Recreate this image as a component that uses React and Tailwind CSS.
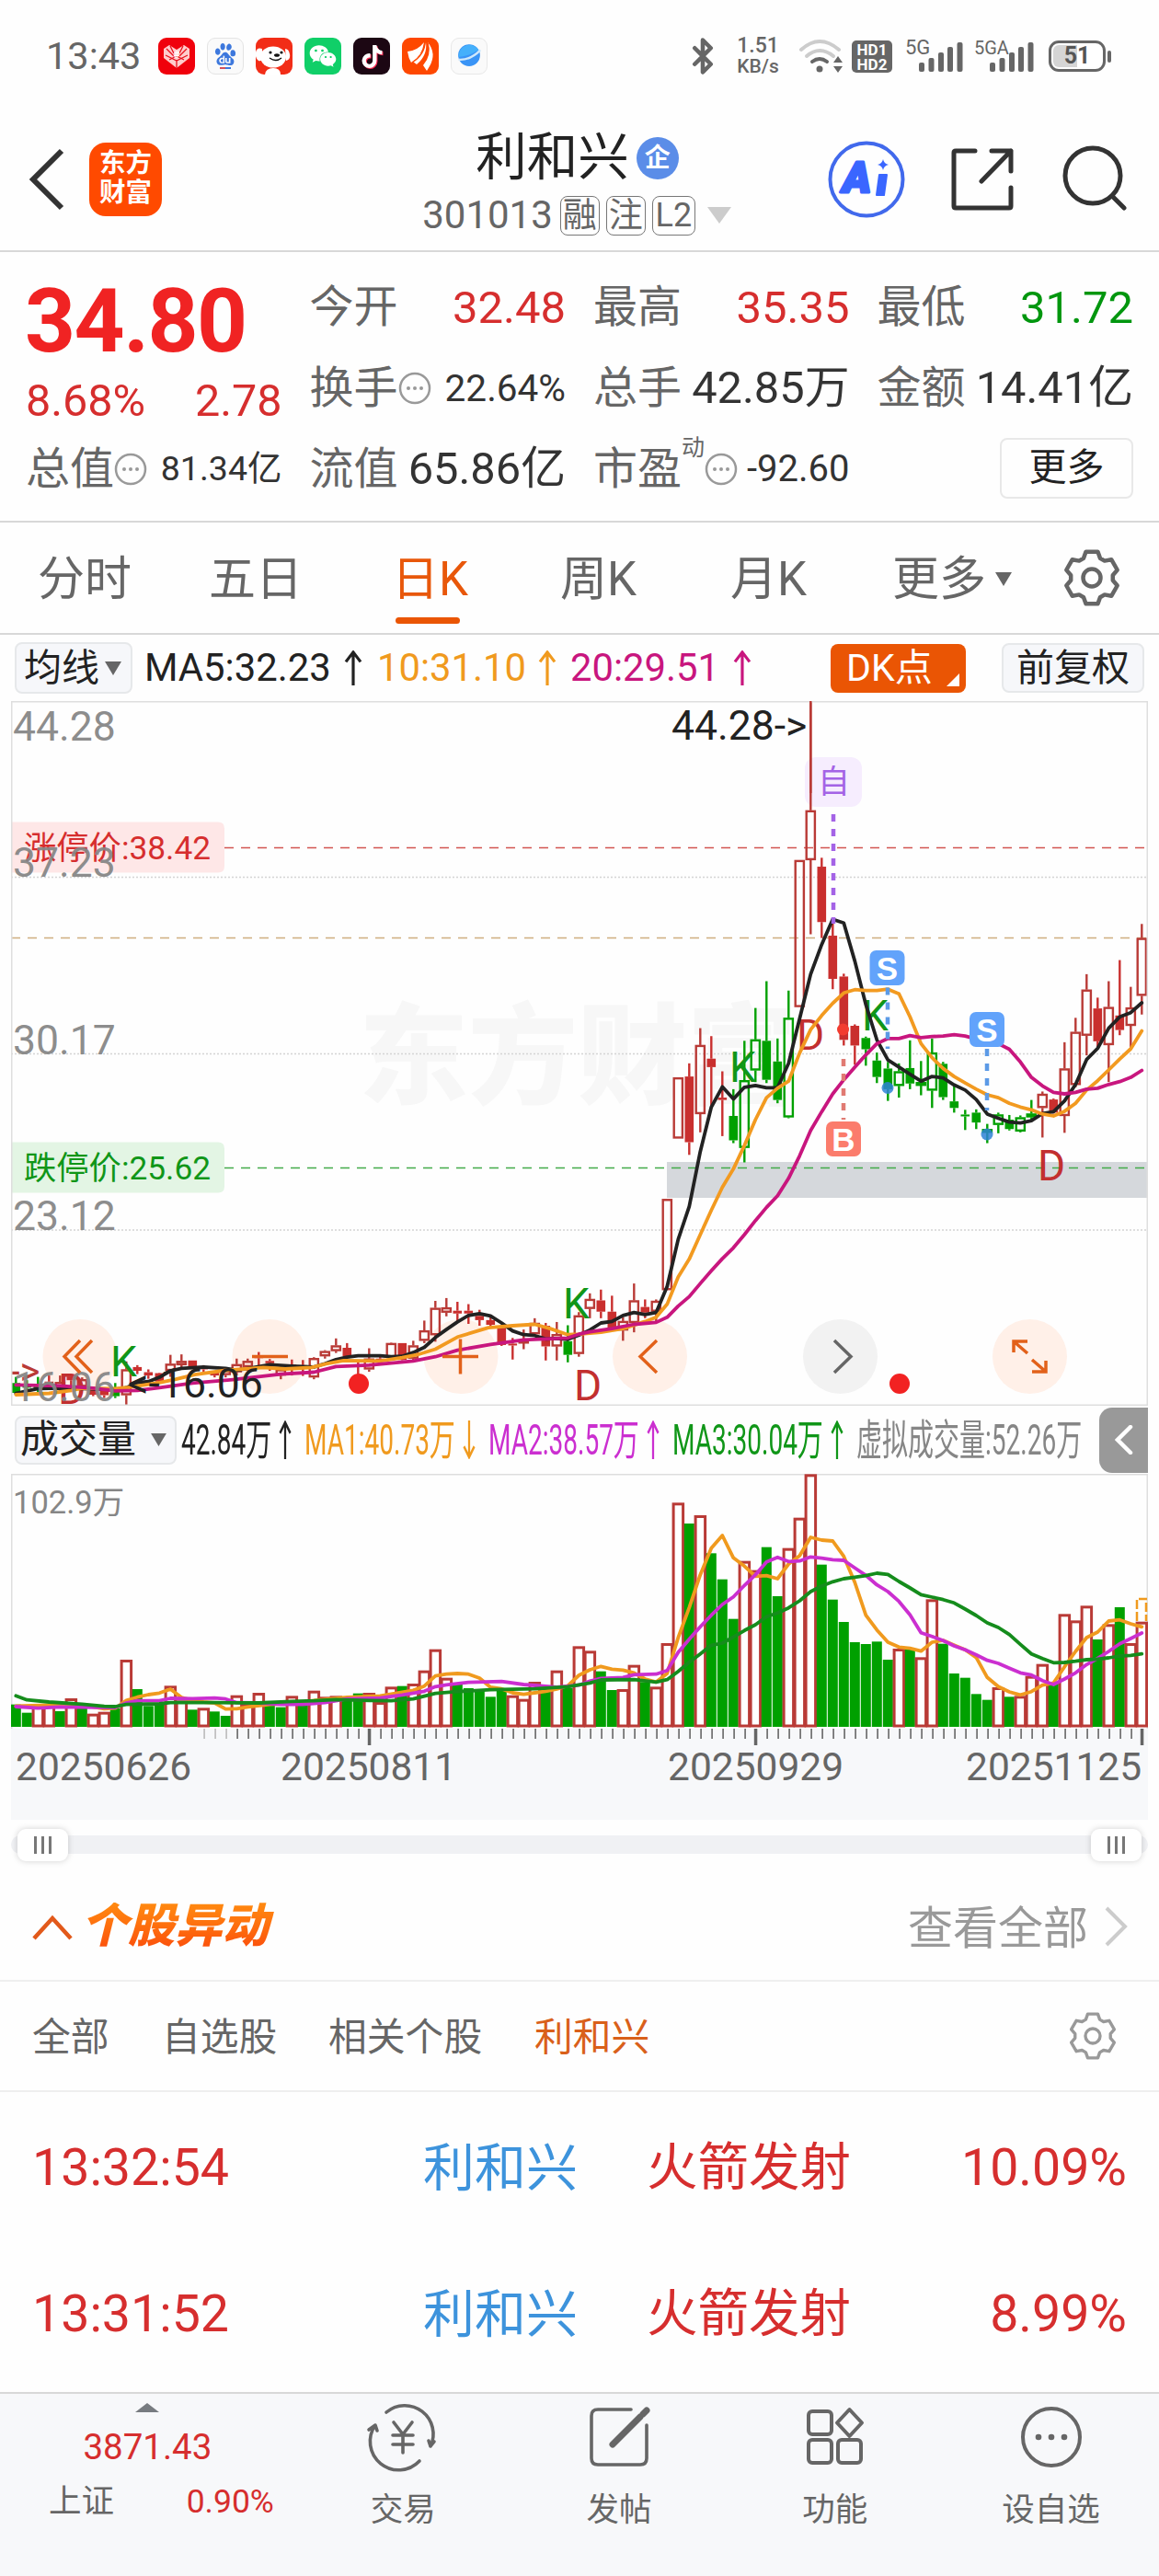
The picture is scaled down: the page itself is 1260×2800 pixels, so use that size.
import { Bluetooth } from "lucide-react";
import { FaTiktok, FaWeixin } from "react-icons/fa6";
import { SiBaidu } from "react-icons/si";

const RED = "#b93a36";
const GREEN = "#00a000";

// [tipo, máximo, techo del cuerpo, piso del cuerpo, mínimo]
// r/g = vela hueca, R/G = vela rellena
const candles = [
  ["G", 1483, 1496, 1517, 1519], ["G", 1490, 1499, 1506, 1514], ["G", 1483, 1500, 1508, 1516], ["R", 1480, 1493, 1502, 1508],
  ["r", 1480, 1494, 1506, 1514], ["R", 1482, 1482, 1490, 1512], ["r", 1484, 1488, 1504, 1512], ["R", 1506, 1511, 1521, 1524],
  ["R", 1506, 1513, 1522, 1528], ["G", 1496, 1510, 1524, 1528], ["r", 1450, 1467, 1522, 1546], ["R", 1458, 1462, 1470, 1477],
  ["R", 1467, 1473, 1480, 1487], ["R", 1474, 1475, 1493, 1495], ["r", 1436, 1455, 1470, 1483], ["r", 1435, 1449, 1458, 1464],
  ["R", 1448, 1448, 1463, 1465], ["R", 1458, 1463, 1467, 1476], ["R", 1470, 1473, 1480, 1484], ["r", 1466, 1469, 1479, 1484],
  ["r", 1444, 1456, 1473, 1480], ["r", 1444, 1449, 1462, 1470], ["R", 1430, 1437, 1443, 1460], ["R", 1445, 1449, 1454, 1470],
  ["r", 1463, 1467, 1480, 1488], ["R", 1446, 1457, 1462, 1480], ["R", 1447, 1458, 1462, 1481], ["r", 1441, 1443, 1484, 1488],
  ["r", 1426, 1428, 1439, 1444], ["r", 1401, 1416, 1428, 1432], ["R", 1411, 1421, 1439, 1440], ["R", 1450, 1458, 1462, 1480],
  ["r", 1422, 1444, 1467, 1472], ["R", 1436, 1444, 1447, 1457], ["r", 1410, 1411, 1441, 1444], ["R", 1411, 1411, 1447, 1448],
  ["r", 1406, 1416, 1444, 1449], ["r", 1363, 1384, 1406, 1411], ["r", 1321, 1336, 1394, 1408], ["r", 1315, 1335, 1346, 1354],
  ["R", 1323, 1342, 1348, 1364], ["R", 1328, 1342, 1348, 1370], ["R", 1340, 1353, 1362, 1374], ["R", 1352, 1362, 1372, 1378],
  ["R", 1376, 1378, 1415, 1417], ["R", 1400, 1412, 1416, 1446], ["r", 1382, 1404, 1411, 1424], ["r", 1358, 1368, 1392, 1397],
  ["R", 1368, 1374, 1418, 1448], ["r", 1366, 1392, 1418, 1448], ["G", 1373, 1407, 1436, 1452], ["r", 1345, 1352, 1434, 1440],
  ["r", 1305, 1317, 1338, 1358], ["R", 1297, 1320, 1344, 1358], ["R", 1310, 1344, 1378, 1380], ["r", 1356, 1364, 1384, 1406],
  ["r", 1284, 1320, 1368, 1388], ["R", 1318, 1334, 1346, 1358], ["r", 1318, 1321, 1344, 1368], ["r", 1104, 1104, 1298, 1298],
  ["r", 845, 845, 975, 975], ["R", 815, 843, 983, 1010], ["r", 740, 776, 923, 962], ["R", 757, 805, 823, 910],
  ["R", 832, 888, 893, 970], ["G", 870, 927, 979, 985], ["g", 767, 851, 995, 1026], ["g", 697, 764, 830, 855],
  ["G", 640, 767, 850, 857], ["G", 762, 811, 893, 900], ["g", 660, 718, 930, 932], ["r", 382, 382, 695, 695],
  ["r", 43, 276, 382, 540], ["R", 377, 396, 514, 548], ["R", 512, 543, 635, 657], ["R", 624, 630, 765, 777],
  ["R", 732, 735, 777, 818], ["G", 758, 761, 785, 820], ["G", 792, 809, 844, 857], ["G", 812, 826, 870, 895],
  ["g", 815, 832, 863, 888], ["G", 766, 825, 858, 870], ["g", 810, 855, 860, 883], ["g", 762, 792, 873, 910],
  ["G", 812, 816, 887, 893], ["G", 863, 896, 910, 920], ["G", 914, 924, 928, 957], ["G", 913, 920, 941, 955],
  ["g", 944, 955, 962, 985], ["g", 920, 924, 946, 964], ["G", 925, 935, 955, 958], ["g", 926, 930, 960, 962],
  ["g", 893, 922, 930, 938], ["r", 875, 880, 910, 973], ["R", 890, 892, 920, 922], ["r", 770, 826, 927, 963],
  ["r", 718, 748, 861, 866], ["r", 625, 658, 756, 798], ["R", 675, 698, 768, 782], ["r", 640, 695, 776, 855],
  ["R", 595, 713, 744, 755], ["r", 652, 696, 735, 783], ["r", 518, 548, 671, 711],
];

// Medias móviles: [índice de vela, valor]
const ma5 = [
  [0, 1518], [2, 1508], [4, 1507], [6, 1508], [9, 1510], [10, 1506], [11, 1495], [12, 1493], [13, 1484], [14, 1470], [15, 1465],
  [17, 1462], [19, 1465], [20, 1469], [23, 1457], [25, 1460], [27, 1462], [28, 1455], [29, 1446], [30, 1441], [31, 1438],
  [33, 1438], [34, 1440], [35, 1439], [36, 1431], [37, 1420], [38, 1399], [39, 1382], [40, 1366], [41, 1352], [42, 1348],
  [43, 1353], [44, 1368], [45, 1385], [46, 1393], [47, 1395], [48, 1402], [49, 1401], [50, 1403], [51, 1394], [52, 1383],
  [53, 1368], [54, 1365], [55, 1352], [56, 1346], [57, 1350], [58, 1346], [59, 1290], [60, 1190], [61, 1120], [62, 1003],
  [63, 908], [64, 865], [65, 891], [66, 866], [67, 862], [68, 867], [69, 867], [70, 815], [71, 720], [72, 625], [73, 562],
  [74, 508], [75, 516], [76, 597], [77, 690], [78, 765], [79, 808], [80, 823], [81, 838], [82, 853], [83, 843], [84, 846],
  [85, 861], [86, 872], [87, 892], [88, 923], [89, 932], [90, 940], [91, 942], [92, 937], [93, 922], [94, 918], [95, 895],
  [96, 860], [97, 807], [98, 783], [99, 740], [100, 716], [101, 707], [102, 686],
];
const ma10 = [
  [0, 1521], [3, 1518], [5, 1512], [6, 1507], [9, 1508], [10.3, 1505], [13, 1495], [14.5, 1488], [16.2, 1478], [19, 1469],
  [22.4, 1463], [24.4, 1466], [26.8, 1463], [28.1, 1455], [29.7, 1448], [33, 1449], [35, 1442], [36.3, 1436], [38, 1424],
  [40, 1398], [42.8, 1378], [45, 1374], [47, 1371], [48.4, 1380], [50, 1393], [51, 1392], [53, 1388], [55, 1380], [57, 1365],
  [58, 1356], [59, 1328], [60, 1270], [61, 1232], [62, 1180], [63, 1128], [64, 1079], [65, 1040], [66, 990], [67, 935],
  [68, 888], [69, 868], [70, 853], [71, 793], [72, 743], [73, 713], [74, 687], [75, 665], [76, 658], [77, 660], [78, 660],
  [79, 657], [80, 667], [81, 716], [82, 773], [83, 803], [84, 826], [85, 843], [86, 857], [87, 870], [88, 882], [89, 888],
  [90, 900], [91, 908], [92, 914], [93, 923], [94, 927], [95, 917], [96, 900], [97, 872], [98, 852], [99, 829], [100, 806],
  [101, 784], [102, 746],
];
const ma20 = [
  [0, 1500], [4, 1502], [7, 1507], [9, 1513], [11, 1512], [13, 1506], [16, 1496], [20, 1488], [24, 1477], [27, 1473], [29, 1461],
  [32, 1458], [36, 1449], [38, 1440], [40, 1426], [43, 1414], [46, 1404], [50, 1400], [51, 1392], [52, 1387], [54, 1380],
  [56, 1371], [58, 1367], [59, 1356], [60, 1332], [61, 1312], [62, 1284], [63, 1257], [64, 1231], [65, 1208], [66, 1180],
  [67, 1150], [68, 1122], [69, 1097], [70, 1060], [71, 1012], [72, 958], [73, 918], [74, 880], [75, 850], [76, 823], [77, 797],
  [78, 773], [79, 762], [80, 762], [81, 756], [82, 760], [83, 758], [84, 757], [85, 754], [86, 757], [87, 763], [88, 767],
  [89, 773], [90, 785], [91, 812], [92, 845], [93, 863], [94, 877], [95, 880], [96, 877], [97, 870], [98, 868], [99, 860],
  [100, 854], [101, 845], [102, 830],
];

const volumes = [
  ["G", 998], ["G", 1025], ["r", 998], ["r", 998], ["G", 1020], ["r", 978], ["G", 1005], ["r", 1028], ["r", 1022], ["G", 1010],
  ["r", 852], ["G", 948], ["G", 1003], ["G", 998], ["r", 937], ["r", 985], ["G", 1015], ["r", 1009], ["G", 1021], ["G", 1035],
  ["r", 968], ["r", 997], ["r", 960], ["G", 995], ["G", 1007], ["r", 970], ["G", 998], ["r", 953], ["r", 973], ["r", 970],
  ["G", 985], ["G", 962], ["r", 960], ["r", 990], ["r", 940], ["G", 938], ["r", 930], ["r", 887], ["r", 818], ["r", 911],
  ["G", 930], ["G", 945], ["G", 950], ["G", 973], ["G", 950], ["r", 968], ["r", 980], ["r", 924], ["G", 945], ["r", 887],
  ["G", 945], ["r", 808], ["r", 823], ["G", 890], ["G", 951], ["r", 948], ["r", 869], ["G", 925], ["r", 940], ["r", 798],
  ["r", 340], ["G", 408], ["r", 381], ["G", 505], ["G", 590], ["G", 719], ["r", 530], ["r", 560], ["G", 485], ["G", 645],
  ["r", 488], ["r", 389], ["r", 247], ["G", 542], ["G", 656], ["G", 729], ["G", 795], ["G", 801], ["G", 793], ["G", 852],
  ["r", 816], ["G", 818], ["r", 844], ["r", 655], ["G", 800], ["G", 897], ["G", 911], ["G", 964], ["G", 983], ["r", 942],
  ["G", 973], ["r", 970], ["r", 905], ["r", 866], ["G", 930], ["r", 703], ["r", 724], ["r", 676], ["G", 786], ["r", 736],
  ["G", 681], ["r", 798], ["r", 728],
];
const vma1 = [
  [0, 1003], [3, 1000], [6, 1000], [8, 1012], [9, 1010], [10, 985], [11, 974], [12, 966], [13, 961], [14, 948], [15, 975],
  [16, 985], [17, 990], [18, 993], [19, 1013], [20, 1012], [21, 1006], [23, 998], [25, 995], [27, 985], [30, 975], [33, 970],
  [35, 958], [36, 952], [37, 938], [38, 905], [39, 899], [40, 897], [41, 899], [42, 912], [43, 942], [44, 947], [45, 960],
  [46, 965], [47, 960], [48, 955], [49, 948], [50, 937], [51, 903], [52, 885], [53, 874], [54, 883], [55, 886], [56, 895],
  [57, 915], [58, 925], [59, 897], [60, 780], [61, 682], [62, 575], [63, 488], [64, 447], [65, 520], [66, 547], [67, 580],
  [68, 578], [69, 588], [70, 540], [71, 513], [72, 453], [73, 462], [74, 465], [75, 515], [76, 600], [77, 707], [78, 755],
  [79, 795], [80, 811], [81, 815], [82, 824], [83, 795], [84, 789], [85, 805], [86, 820], [87, 845], [88, 910], [89, 940],
  [90, 957], [91, 967], [92, 956], [93, 935], [94, 928], [95, 875], [96, 825], [97, 780], [98, 762], [99, 726], [100, 722],
  [101, 735], [102, 745],
];
const vma2 = [
  [0, 1005], [2, 1010], [4, 1006], [9, 1008], [10, 993], [11, 986], [13, 986], [14, 978], [16, 979], [18, 977], [19, 980],
  [20, 992], [22, 993], [24, 998], [26, 998], [28, 992], [30, 980], [33, 977], [35, 967], [37, 955], [38, 940], [39, 934],
  [41, 926], [44, 923], [46, 933], [49, 942], [51, 935], [52, 922], [53, 913], [55, 910], [56, 901], [58, 899], [59, 887],
  [60, 828], [61, 785], [62, 745], [63, 707], [64, 672], [65, 647], [66, 610], [67, 575], [68, 533], [69, 518], [70, 532],
  [71, 530], [72, 517], [73, 521], [74, 526], [75, 528], [76, 553], [77, 577], [78, 608], [79, 630], [80, 662], [81, 706],
  [82, 764], [83, 776], [84, 790], [85, 807], [86, 820], [87, 836], [88, 854], [89, 864], [90, 880], [91, 895], [92, 902],
  [93, 920], [94, 933], [95, 915], [96, 895], [97, 868], [98, 848], [99, 825], [100, 800], [101, 783], [102, 765],
];
const vma3 = [
  [0, 970], [1, 983], [3, 990], [6, 997], [8, 1004], [9, 1005], [10, 998], [13, 996], [14, 992], [18, 992], [22, 993], [25, 988],
  [27, 986], [29, 982], [32, 985], [34, 986], [36, 980], [38, 962], [40, 956], [43, 950], [47, 947], [50, 940], [52, 928],
  [53, 918], [56, 917], [58, 925], [59, 917], [60, 890], [61, 860], [62, 833], [63, 805], [64, 798], [65, 778], [66, 757],
  [67, 738], [68, 712], [69, 700], [70, 683], [71, 660], [72, 630], [73, 612], [74, 598], [75, 588], [76, 583], [77, 578],
  [78, 570], [79, 574], [80, 597], [81, 618], [82, 640], [83, 648], [84, 656], [85, 667], [86, 687], [87, 708], [88, 732],
  [89, 747], [90, 770], [91, 802], [92, 833], [93, 848], [94, 862], [95, 861], [96, 857], [97, 852], [98, 850], [99, 846],
  [100, 840], [101, 838], [102, 833],
];

const xAt = (i) => 17.3 + 12 * i;
const priceY = (v) => 740 + v / 1.96;
const volY = (v) => 1520 + v / 3;
const points = (data, y) => data.map(([i, v]) => `${xAt(i)},${y(v).toFixed(1)}`).join(" ");

function Line({ data, y, color }) {
  return (
    <polyline points={points(data, y)} fill="none" stroke={color} strokeWidth="3.800" strokeLinejoin="round" strokeLinecap="round" />
  );
}

function Gear({ className, color, stroke }) {
  const pts = [];
  for (let k = 0; k < 6; k++) {
    [[-23, 23], [-13, 29], [13, 29], [23, 23]].forEach(([off, r]) => {
      const a = ((k * 60 - 90 + off) * Math.PI) / 180;
      pts.push(`${(32 + r * Math.cos(a)).toFixed(1)},${(32 + r * Math.sin(a)).toFixed(1)}`);
    });
  }
  return (
    <svg viewBox="0 0 64 64" className={className} fill="none" stroke={color} strokeWidth={stroke} strokeLinejoin="round">
      <polygon points={pts.join(" ")} />
      <circle cx="32" cy="32" r="9.5" />
    </svg>
  );
}

function Arrow({ down, className }) {
  return (
    <svg viewBox="0 0 20 40" preserveAspectRatio="none" className={className} fill="none" stroke="currentColor" strokeWidth="3.200">
      {down ? <path d="M10 0v38M2 27l8 11 8-11" /> : <path d="M10 40V2M2 13L10 2l8 11" />}
    </svg>
  );
}

function InfoDots() {
  return (
    <svg viewBox="0 0 36 36" className="w-[36px] h-[36px] shrink-0" fill="#999">
      <circle cx="18" cy="18" r="16" fill="none" stroke="#999" strokeWidth="2.5" />
      <circle cx="11" cy="18" r="2" />
      <circle cx="18" cy="18" r="2" />
      <circle cx="25" cy="18" r="2" />
    </svg>
  );
}

function Signal() {
  return (
    <svg viewBox="0 0 48 32" className="w-[48px] h-[32px]" fill="#666">
      <rect x="0" y="22" width="6" height="10" rx="2" />
      <rect x="10.5" y="17" width="6" height="15" rx="2" />
      <rect x="21" y="11" width="6" height="21" rx="2" />
      <rect x="31" y="5" width="6" height="27" rx="2" />
      <rect x="41.5" y="0" width="6" height="32" rx="2" />
    </svg>
  );
}

function StatusBar() {
  return (
    <div className="h-[122px] flex items-center pl-[50px] pr-[52px]">
      <div className="text-[41.500px] text-[#666] w-[122px] leading-none">13:43</div>
      <div className="flex gap-[13px]">
        <svg viewBox="0 0 40 40" className="w-[40px] h-[40px] rounded-[9px] bg-[#f0000c]">
          <path d="M20 33L6 22V12l6-4 8 5 8-5 6 4v10z" fill="#fcc" />
          <path d="M9 12l8 8M13 9l4 8M31 12l-8 8M27 9l-4 8M8 19l12 6 12-6M12 24l8-4 8 4M20 24v9" fill="none" stroke="#e8101c" strokeWidth="1.3" />
          <text x="20" y="21.500" fontSize="11" fontWeight="700" textAnchor="middle" fill="#fff">#</text>
        </svg>
        <div className="w-[40px] h-[40px] rounded-[9px] bg-[#fafafa] border border-[#e4e4e4] flex flex-col items-center justify-center">
          <SiBaidu className="w-[24px] h-[24px] text-[#3d78dd]" />
          <div className="w-[12px] h-[2px] mt-[2px] bg-[#d2505a] border-r-[6px] border-[#3d78dd]" />
        </div>
        <svg viewBox="0 0 40 40" className="w-[40px] h-[40px] rounded-[9px] bg-[#f22d17]">
          <path d="M10 40q1-7 9-7t8 7z" fill="#fff" />
          <path d="M7 12q-6-2-7 4t3 9q4 1 4-3zM32 12q4 0 5 6t-4 7z" fill="#fff" />
          <ellipse cx="19" cy="21" rx="14" ry="11.5" fill="#fff" />
          <circle cx="16" cy="16" r="1.6" fill="#111" />
          <circle cx="28" cy="16" r="1.6" fill="#111" />
          <ellipse cx="23" cy="19" rx="3" ry="1.8" fill="#111" />
          <path d="M15 22q7 5 13 0" fill="none" stroke="#111" strokeWidth="1.4" />
        </svg>
        <div className="w-[40px] h-[40px] rounded-[9px] bg-[#10cf68] flex items-center justify-center">
          <FaWeixin className="w-[30px] h-[30px] text-white" />
        </div>
        <div className="w-[40px] h-[40px] rounded-[9px] bg-[#1c0713] flex items-center justify-center">
          <FaTiktok className="w-[25px] h-[25px] text-white drop-shadow-[1px_1px_0_#fe2c55]" />
        </div>
        <svg viewBox="0 0 40 40" className="w-[40px] h-[40px] rounded-[9px] bg-[#fe4800]" fill="#fff">
          <path d="M6 15Q17 14 24 5q-2 15-14 22-3-5-4-12z" />
          <path d="M26 5q2 14-10 24l-4-3Q24 17 26 5z" />
          <path d="M28 5q10 12 2 26l-3 5-4-6Q33 18 28 5z" />
          <path d="M25 5q0 13-14 22M28 6q4 14-10 25" fill="none" stroke="#fe4800" strokeWidth="1.3" />
        </svg>
        <svg viewBox="0 0 40 40" className="w-[40px] h-[40px] rounded-[9px] bg-[#fafafa] border border-[#e8e8e8]">
          <circle cx="20" cy="19" r="12.5" fill="#3a94f6" />
          <path d="M8 19a12.500 12.500 0 0 1 23-6Q20 20 8 21z" fill="#45b0fb" />
          <path d="M8 24q13 1 25-11" fill="none" stroke="#cfe8fb" strokeWidth="2.500" />
        </svg>
      </div>
      <div className="ml-auto flex items-center">
        <Bluetooth className="w-[42px] h-[48px] text-[#666]" strokeWidth={2.6} />
        <div className="ml-[12px] w-[54px] text-center text-[23px] leading-[23px] font-medium text-[#666]">
          <div>1.51</div>
          <div className="text-[21px]">KB/s</div>
        </div>
        <svg viewBox="0 0 50 38" className="w-[50px] h-[38px] ml-[17px]" fill="none" strokeLinecap="round" strokeWidth="4">
          <path d="M3 12Q23-6 44 12" stroke="#ccc" />
          <path d="M9 19q14-12 29 0" stroke="#ccc" />
          <path d="M15 25q8-6 16 0" stroke="#666" />
          <circle cx="23" cy="33" r="3.500" fill="#666" />
          <path d="M43 19l5 7H38zM43 37l5-7H38z" fill="#666" />
        </svg>
        <div className="ml-[8px] w-[44px] h-[35px] rounded-[5px] bg-[#666] text-white text-[17px] leading-[16px] font-bold text-center pt-[2px]">
          <div>HD1</div>
          <div>HD2</div>
        </div>
        <div className="relative ml-[29px] pt-[2px]">
          <Signal />
          <span className="absolute left-[-15px] top-[-3px] text-[22px] leading-none text-[#666]">5G</span>
        </div>
        <div className="relative ml-[29px] pt-[2px]">
          <Signal />
          <span className="absolute left-[-17px] top-[-2px] text-[20px] leading-none text-[#666]">5GA</span>
        </div>
        <div className="ml-[16px] w-[62px] h-[34px] rounded-[11px] border-[3.5px] border-[#666] p-[2px] flex">
          <div className="flex-1 rounded-[6px] bg-gradient-to-r from-[#d5d5d5] from-50% to-white to-50% text-[25px] leading-[23px] font-bold text-center text-[#555]">
            51
          </div>
        </div>
        <div className="ml-[2px] w-[4px] h-[13px] rounded bg-[#666]" />
      </div>
    </div>
  );
}

function Header() {
  return (
    <div className="h-[152px] flex border-b-2 border-[#d8d8d8] pl-[30px]">
      <svg viewBox="0 0 40 68" className="w-[40px] h-[68px] mt-[39px]" fill="none" stroke="#333" strokeWidth="6">
        <path d="M37 3L6 34l31 31" />
      </svg>
      <div className="ml-[27px] mt-[33px] w-[79px] h-[80px] rounded-[18px] bg-[#ff4a00] text-white text-[28.500px] leading-[32px] font-bold text-center pt-[7px]">
        <div>东方</div>
        <div>财富</div>
      </div>
      <div className="w-[504px] ml-[199px] pt-[17px] flex flex-col items-center">
        <div className="flex items-center h-[66px] pl-[1px]">
          <span className="text-[55.500px] text-[#222] leading-none">利和兴</span>
          <span className="ml-[8px] w-[46px] h-[46px] rounded-full bg-[#5b8de8] text-white text-[28px] font-bold flex items-center justify-center">
            企
          </span>
        </div>
        <div className="flex items-center h-[46px] mt-[6px] text-[42px] leading-none text-[#666]">
          301013
          <span className="ml-[8px] w-[43px] h-[43px] rounded-[8px] border-[1.5px] border-[#777] text-[37px] flex items-center justify-center">融</span>
          <span className="ml-[7px] w-[43px] h-[43px] rounded-[8px] border-[1.5px] border-[#777] text-[37px] flex items-center justify-center">注</span>
          <span className="ml-[7px] w-[47px] h-[43px] rounded-[8px] border-[1.5px] border-[#777] text-[36px] flex items-center justify-center">L2</span>
          <svg viewBox="0 0 26 18" className="w-[26px] h-[18px] ml-[13px]" fill="#ccc">
            <path d="M0 0h26L13 18z" />
          </svg>
        </div>
      </div>
      <svg viewBox="0 0 84 84" className="w-[84px] h-[84px] mt-[31px] ml-[21px] shrink-0">
        <circle cx="42" cy="42" r="39.500" fill="none" stroke="#4169ec" strokeWidth="4" />
        <text x="16" y="56" fontSize="47" fontWeight="900" fontStyle="italic" fill="#3a66ff" stroke="#3a66ff" strokeWidth="3" strokeLinejoin="round">A</text>
        <path d="M56 37h8l-3 22h-8z" fill="#3a66ff" stroke="#3a66ff" strokeWidth="2" strokeLinejoin="round" />
        <path d="M60 20q1 5 6 6-5 1-6 6-1-5-6-6 5-1 6-6z" fill="#3a66ff" />
      </svg>
      <svg viewBox="0 0 68 68" className="w-[68px] h-[68px] mt-[39px] ml-[50px] shrink-0" fill="none" stroke="#333" strokeWidth="5" strokeLinecap="round" strokeLinejoin="round">
        <path d="M26 3H5q-2 0-2 2v58q0 2 2 2h58q2 0 2-2V43M44 3h21v22M65 3L33 36" />
      </svg>
      <svg viewBox="0 0 70 72" className="w-[70px] h-[72px] mt-[36px] ml-[53px] shrink-0" fill="none" stroke="#333" strokeWidth="5" strokeLinecap="round">
        <circle cx="33" cy="33" r="30" />
        <path d="M54 55l13 13" />
      </svg>
    </div>
  );
}

function Stat({ label, info, children, className }) {
  return (
    <div className="flex items-center h-[88px] pt-[2px] leading-none whitespace-nowrap">
      <span className="text-[48px] text-[#666]">{label}</span>
      {info && <InfoDots />}
      <span className={`ml-auto ${className}`}>{children}</span>
    </div>
  );
}

function Quote() {
  return (
    <div className="h-[294px] border-b-2 border-[#d8d8d8] pt-[15px] px-[28px]">
      <div className="grid grid-cols-4 gap-x-[30px] w-[1204px]">
        <div className="row-span-2 leading-none">
          <div className="text-[96px] font-bold text-[#f02323] tracking-[-1.5px] mt-[12px] ml-[-1px]">34.80</div>
          <div className="flex justify-between text-[48.500px] text-[#d62e2e] mt-[15px]">
            <span>8.68%</span>
            <span>2.78</span>
          </div>
        </div>
        <Stat label="今开" className="text-[49px] text-[#d62e2e]">32.48</Stat>
        <Stat label="最高" className="text-[49px] text-[#d62e2e]">35.35</Stat>
        <Stat label="最低" className="text-[49px] text-[#00960e]">31.72</Stat>
        <Stat label="换手" info className="text-[40.500px] text-[#333]">22.64%</Stat>
        <Stat label="总手" className="text-[48.800px] text-[#333]">42.85万</Stat>
        <Stat label="金额" className="text-[48.800px] text-[#333]">14.41亿</Stat>
        <Stat label="总值" info className="text-[37.500px] text-[#333]">81.34亿</Stat>
        <Stat label="流值" className="text-[48.800px] text-[#333]">65.86亿</Stat>
        <div className="flex items-center h-[88px] pt-[2px] leading-none">
          <span className="text-[48px] text-[#666]">市盈</span>
          <span className="text-[25px] text-[#666] self-start mt-[7px]">动</span>
          <InfoDots />
          <span className="ml-auto text-[40px] text-[#333]">-92.60</span>
        </div>
        <div className="flex items-center justify-end h-[88px]">
          <div className="w-[145px] h-[66px] rounded-[8px] border-2 border-[#e8e8e8] text-[41px] text-[#222] flex items-center justify-center">更多</div>
        </div>
      </div>
    </div>
  );
}

function PeriodTabs() {
  return (
    <div className="h-[122px] border-b-2 border-[#d8d8d8] flex items-center pt-[2px] pl-[41px] text-[51px] text-[#666] leading-none whitespace-nowrap">
      <span className="w-[186px]">分时</span>
      <span className="w-[199px]">五日</span>
      <span className="relative w-[183px] text-[#e8570a]">
        日K
        <span className="absolute left-[4px] top-[67px] w-[70px] h-[7px] rounded bg-[#ea5504]" />
      </span>
      <span className="w-[185px]">周K</span>
      <span className="w-[176px]">月K</span>
      <span>更多</span>
      <svg viewBox="0 0 18 15" className="w-[18px] h-[15px] ml-[10px]" fill="#666">
        <path d="M0 0h18L9 15z" />
      </svg>
      <Gear className="w-[64px] h-[64px] ml-[55px] mt-[-2px]" color="#666" stroke={4.5} />
    </div>
  );
}

function IndicatorRow() {
  return (
    <div className="h-[72px] flex items-center px-[16px] text-[41px] leading-none whitespace-nowrap">
      <div className="w-[128px] h-[56px] rounded-[8px] bg-[#f6f7fa] border-2 border-[#e6e8ea] flex items-center pl-[8px] text-[#222]">
        均线
        <svg viewBox="0 0 18 15" className="w-[18px] h-[15px] ml-[6px]" fill="#666">
          <path d="M0 0h18L9 15z" />
        </svg>
      </div>
      <div className="flex items-center w-[253px] pl-[13px] text-[41.800px] text-[#222]">
        MA5:32.23
        <Arrow className="w-[20px] h-[38px] ml-[14px]" />
      </div>
      <div className="flex items-center w-[210px] pl-[13px] text-[41.800px] text-[#f09a1e]">
        10:31.10
        <Arrow className="w-[20px] h-[38px] ml-[13px]" />
      </div>
      <div className="flex items-center w-[210px] pl-[13px] text-[41.800px] text-[#c8167e]">
        20:29.51
        <Arrow className="w-[20px] h-[38px] ml-[15px]" />
      </div>
      <div className="relative ml-auto w-[147px] h-[53px] rounded-[8px] bg-[#ea5504] text-white flex items-center pl-[17px]">
        DK点
        <svg viewBox="0 0 14 14" className="absolute right-[7px] bottom-[7px] w-[14px] h-[14px]" fill="#fff">
          <path d="M14 0v14H0z" />
        </svg>
      </div>
      <div className="ml-[39px] w-[155px] h-[54px] rounded-[8px] bg-[#f6f7fa] border-2 border-[#e6e8ea] text-[#222] flex items-center justify-center">前复权</div>
    </div>
  );
}

function Candle({ i, d }) {
  const [type, hi, top, bot, lo] = d;
  const x = xAt(i);
  const filled = type === "R" || type === "G";
  const color = type.toLowerCase() === "g" ? GREEN : filled ? "#c92f2e" : RED;
  const y1 = priceY(top);
  const h = Math.max(priceY(bot) - y1, 2);
  return (
    <g stroke={color} strokeWidth="2.4">
      {hi < top && <path d={`M${x} ${priceY(hi)}V${y1}`} />}
      {lo > bot && <path d={`M${x} ${y1 + h}V${priceY(lo)}`} />}
      {filled ? (
        <rect x={x - 4.8} y={y1} width="9.600" height={h} fill={color} stroke="none" />
      ) : (
        <rect x={x - 4.6} y={y1 + 1} width="9.200" height={Math.max(h - 2, 2)} fill="none" />
      )}
    </g>
  );
}

const axisPrices = [
  ["44.28", 805], ["37.23", 953], ["30.17", 1146], ["23.12", 1337], ["16.06", 1523],
];
const kMarks = [[793, 1176], [937, 1120], [612, 1433], [120, 1496]];
const dMarks = [[866, 1141], [1128, 1283], [624, 1522], [63, 1526]];

function Badge({ x, y, letter, color }) {
  return (
    <g>
      <rect x={x} y={y} width="38" height="38" rx="7" fill={color} />
      <text x={x + 19} y={y + 31.5} fontSize="35" fontWeight="700" textAnchor="middle" fill="#fff" className="font-['Liberation_Sans']">
        {letter}
      </text>
    </g>
  );
}

function PriceChart() {
  return (
    <svg viewBox="12 762 1236 766" className="block w-[1236px] h-[766px] mx-auto">
      <text x="390" y="1191" fontSize="119" fontWeight="900" fill="#f7f7f7">东方财富</text>
      <rect x="725" y="1263" width="523" height="39" fill="#d5d8dc" />
      <g stroke="#d4d4d4" strokeWidth="1.500" strokeDasharray="2 2">
        <path d="M12 953.500H1248M12 1145.500H1248M12 1337H1248" />
      </g>
      <g strokeWidth="1.500" strokeDasharray="10 8" fill="none">
        <path d="M244 921.500H1248" stroke="#d25552" />
        <path d="M12 1019.500H1248" stroke="#cfae80" />
        <path d="M244 1269.500H1248" stroke="#43ab4a" />
      </g>
      <path d="M12 893.500h225q7 0 7 7v41q0 7-7 7H12z" fill="#fee7e7" />
      <path d="M12 1241.500h225q7 0 7 7v41q0 7-7 7H12z" fill="#e3f5e4" />
      <text x="26" y="934" fontSize="35.300" fill="#d62e2e">涨停价:38.42</text>
      <text x="26" y="1282" fontSize="35.300" fill="#109618">跌停价:25.62</text>

      {[87, 293, 501, 706.5, 1119.5].map((cx) => (
        <circle key={cx} cx={cx} cy="1474.500" r="40.500" fill="#fff0e8" />
      ))}
      <circle cx="913.500" cy="1474.500" r="40.500" fill="#f2f2f2" />

      <rect x="875" y="823" width="62" height="54" rx="12" fill="#f6edfe" />
      {candles.map((d, i) => (
        <Candle key={i} i={i} d={d} />
      ))}
      <g fontSize="46">
        {dMarks.map(([x, y]) => (
          <text key={x} x={x} y={y} fill="#c22f2f">D</text>
        ))}
        {kMarks.map(([x, y]) => (
          <text key={x} x={x} y={y} fill="#109618">K</text>
        ))}
        <text x="10" y="1505" fontSize="42" fill="#b93a36">-&gt;</text>
      </g>
      <Line data={ma5} y={priceY} color="#222" />
      <Line data={ma10} y={priceY} color="#f29a20" />
      <Line data={ma20} y={priceY} color="#c8167e" />

      <text x="889" y="862" fontSize="35" fill="#a463e6">自</text>
      <g strokeWidth="4.500" strokeDasharray="8 8">
        <path d="M906 885V1004" stroke="#a463e6" />
        <path d="M965 1073.500V1140M1073 1140V1207" stroke="#5c9ae6" />
        <path d="M917 1151V1217" stroke="#e07a72" />
      </g>
      <Badge x={945.5} y={1033} letter="S" color="#62a3fb" />
      <Badge x={1054} y={1100} letter="S" color="#62a3fb" />
      <Badge x={898} y={1219} letter="B" color="#fb7c6c" />
      <circle cx="965" cy="1182.500" r="6.500" fill="#2f83d6" fillOpacity=".85" />
      <circle cx="1073" cy="1233" r="6.500" fill="#2f83d6" fillOpacity=".85" />
      <circle cx="916.500" cy="1119" r="6.500" fill="#f23c30" />

      <g fontSize="44.500" fill="#868686" fillOpacity=".95">
        {axisPrices.map(([t, y]) => (
          <text key={t} x="14" y={y}>{t}</text>
        ))}
      </g>
      <text x="730" y="804" fontSize="44.500" fill="#222">44.28-&gt;</text>
      <text x="139" y="1519" fontSize="44.500" fill="#222">&lt;-16.06</text>

      <circle cx="390" cy="1504" r="11" fill="#f22222" />
      <circle cx="978" cy="1504" r="11" fill="#f22222" />
      <g fill="none" stroke="#e2611a" strokeWidth="3.500">
        <path d="M87 1457l-17 17.500 17 17.500M100 1457l-17 17.500 17 17.500" />
        <path d="M274 1474.500h39M481 1474.500h39M500.500 1455.500v38" />
        <path d="M714 1457l-18 17.500 18 17.500" />
        <path d="M1102 1470v-12h15M1102 1458l15 13M1137 1479v12h-15M1137 1491l-15-13" />
        <path d="M907 1457l18 17.500-18 17.500" stroke="#666" />
      </g>
      <rect x="12.500" y="762.500" width="1235" height="765" fill="none" stroke="#dedede" strokeWidth="2" />
      <path d="M881.300 762v100" stroke={RED} strokeWidth="2.400" />
    </svg>
  );
}

function VolItem({ text, color, width, dir }) {
  return (
    <div className={`flex items-center ${width} ${color}`}>
      <div className="flex-1 min-w-0">
        <div className="w-max origin-left scale-x-[0.609] text-[46px]">{text}</div>
      </div>
      {dir && <Arrow down={dir === "down"} className="w-[14px] h-[42px] mr-[14px]" />}
    </div>
  );
}

function VolumeHeader() {
  return (
    <div className="h-[74px] flex items-center pl-[16px] pr-[12px] leading-none whitespace-nowrap">
      <div className="w-[176px] h-[53px] rounded-[8px] bg-[#f6f7fa] border-2 border-[#e6e8ea] flex items-center pl-[4px] text-[42px] text-[#222] mr-[5px] shrink-0">
        成交量
        <svg viewBox="0 0 18 15" className="w-[17px] h-[14px] ml-[16px]" fill="#666">
          <path d="M0 0h18L9 15z" />
        </svg>
      </div>
      <VolItem text="42.84万" color="text-[#222]" width="w-[134px]" dir="up" />
      <VolItem text="MA1:40.73万" color="text-[#f09a1e]" width="w-[200px]" dir="down" />
      <VolItem text="MA2:38.57万" color="text-[#cb2fd0]" width="w-[200px]" dir="up" />
      <VolItem text="MA3:30.04万" color="text-[#109618]" width="w-[200px]" dir="up" />
      <VolItem text="虚拟成交量:52.26万" color="text-[#868686]" width="w-[250px]" />
      <div className="ml-auto w-[53px] h-[71px] rounded-l-[14px] bg-[#999] flex items-center justify-center shrink-0">
        <svg viewBox="0 0 20 32" className="w-[20px] h-[32px]" fill="none" stroke="#fff" strokeWidth="4.500" strokeLinecap="round">
          <path d="M17 2L3 16l14 14" />
        </svg>
      </div>
    </div>
  );
}

function VolumeChart() {
  const base = 1877;
  return (
    <svg viewBox="12 1602 1236 277" className="block w-[1236px] h-[277px] mx-auto">
      <path d="M12.500 1879V1602.500H1247.500V1879" fill="none" stroke="#dedede" strokeWidth="2" />
      <text x="14" y="1645" fontSize="34.500" fill="#868686">102.9万</text>
      {volumes.map(([type, v], i) =>
        type === "G" ? (
          <rect key={i} x={xAt(i) - 5.5} y={volY(v)} width="11" height={base - volY(v)} fill={GREEN} />
        ) : (
          <rect key={i} x={xAt(i) - 5.2} y={volY(v) + 1.5} width="10.500" height={base - volY(v) - 2.5} fill="#fff" stroke={RED} strokeWidth="3" />
        )
      )}
      <path d="M1236 1762V1738h11M1246 1742v20" fill="none" stroke="#f09a1e" strokeWidth="2.500" strokeDasharray="10 3" />
      <Line data={vma1} y={volY} color="#f09a1e" />
      <Line data={vma2} y={volY} color="#cb2fd0" />
      <Line data={vma3} y={volY} color="#158c1c" />
    </svg>
  );
}

function TimeAxis() {
  const ticks = Array.from({ length: 86 }, (_, k) => k + 17);
  return (
    <div className="w-[1236px] h-[99px] mx-auto bg-[#f7f8fa]">
      <svg viewBox="12 1879 1236 20" className="block w-[1236px] h-[20px]">
        {ticks.map((i) => {
          const big = i === 32 || i === 67 || i === 102;
          return (
            <rect key={i} x={xAt(i) - (big ? 1.5 : 0)} y="1879" width={big ? 3.5 : 1.6} height={big ? 18 : 11} fill={i < 20 ? "#bbb" : "#666"} />
          );
        })}
      </svg>
      <div className="flex pl-[5px] pt-[1px] text-[42.500px] leading-none text-[#666]">
        <span className="w-[288px]">20250626</span>
        <span className="w-[421px]">20250811</span>
        <span className="w-[324px]">20250929</span>
        <span>20251125</span>
      </div>
    </div>
  );
}

function Handle() {
  return (
    <div className="w-[55px] h-[35px] rounded-[9px] bg-white shadow-[0_0_7px_rgba(0,0,0,0.18)] flex items-center justify-center gap-[5px]">
      <div className="w-[3px] h-[19px] bg-[#777]" />
      <div className="w-[3px] h-[19px] bg-[#777]" />
      <div className="w-[3px] h-[19px] bg-[#777]" />
    </div>
  );
}

function RangeSlider() {
  return (
    <div className="h-[84px] px-[12px] pt-[17px]">
      <div className="h-[20px] rounded-full bg-[#f0f1f4] flex items-center justify-between px-[7px]">
        <Handle />
        <Handle />
      </div>
    </div>
  );
}

const moves = [
  { hora: "13:32:54", cambio: "10.09%" },
  { hora: "13:31:52", cambio: "8.99%" },
];

function Moves() {
  return (
    <div className="h-[538px] leading-none whitespace-nowrap">
      <div className="h-[92px] flex items-start pl-[35px] pr-[34px] border-b-2 border-[#efefef]">
        <svg viewBox="0 0 44 28" className="w-[44px] h-[28px] mt-[19px]" fill="none" stroke="#e2591a" strokeWidth="4.500">
          <path d="M2 26L22 4l20 22" />
        </svg>
        <div className="ml-[9px] mt-[6px] text-[51px] pr-2 font-black italic bg-gradient-to-b from-[#ff8a10] to-[#fb4e0c] bg-clip-text text-transparent">个股异动</div>
        <div className="ml-auto mt-[10px] text-[49px] text-[#999]">查看全部</div>
        <svg viewBox="0 0 26 44" className="w-[26px] h-[44px] ml-[17px] mt-[10px]" fill="none" stroke="#ccc" strokeWidth="4">
          <path d="M3 2l20 20L3 42" />
        </svg>
      </div>
      <div className="h-[120px] flex items-center pt-[3px] pl-[35px] text-[41.800px] text-[#666] border-b-2 border-[#efefef]">
        <span className="w-[141px]">全部</span>
        <span className="w-[181px]">自选股</span>
        <span className="w-[224px]">相关个股</span>
        <span className="text-[#d9601a]">利和兴</span>
        <Gear className="w-[54px] h-[54px] ml-auto mr-[45px] mt-[-3px]" color="#999" stroke={4} />
      </div>
      <div className="pt-[3px]">
        {moves.map((m) => (
          <div key={m.hora} className="h-[159px] flex items-center pl-[35px] pr-[35px] text-[55.500px] text-[#d62e2e]">
            <span className="w-[425px]">{m.hora}</span>
            <span className="w-[243px] text-[56px] text-[#3d93dc]">利和兴</span>
            <span>火箭发射</span>
            <span className="ml-auto">{m.cambio}</span>
          </div>
        ))}
      </div>
    </div>
  );
}

function NavItem({ label, children }) {
  return (
    <div className="w-[235px] flex flex-col items-center pt-[7px]">
      <svg viewBox="0 0 80 80" className="w-[80px] h-[80px]" fill="none" stroke="#666" strokeWidth="4" strokeLinecap="round" strokeLinejoin="round">
        {children}
      </svg>
      <span className="mt-[22px] text-[35.500px] text-[#666]">{label}</span>
    </div>
  );
}

function BottomNav() {
  return (
    <div className="h-[200px] bg-[#f7f8fa] border-t-2 border-[#d8d8d8] flex leading-none whitespace-nowrap">
      <div className="w-[321px] flex flex-col items-center pt-[10px]">
        <svg viewBox="0 0 26 10" className="w-[26px] h-[10px]" fill="#777b80">
          <path d="M13 0l13 10H0z" />
        </svg>
        <div className="mt-[19px] text-[38.500px] text-[#d62e2e]">3871.43</div>
        <div className="mt-[22px] ml-[30px] w-[245px] flex justify-between text-[35.500px]">
          <span className="text-[#666]">上证</span>
          <span className="text-[#d62e2e]">0.90%</span>
        </div>
      </div>
      <NavItem label="交易">
        <path d="M22 13A31 31 0 0 1 70 50l4-5M70 50l-2-6M58 66A31 31 0 0 1 10 27l-7 5M10 27l2 6M30 24l10 13 10-13M40 37v20M29 38h22M29 48h22" strokeWidth="3.600" />
      </NavItem>
      <NavItem label="发帖">
        <path d="M53 10H17q-7 0-7 7v46q0 7 7 7h46q7 0 7-7V27" strokeWidth="3.600" />
        <path d="M70 11l-4 4M63 18L33 48" strokeWidth="7" />
      </NavItem>
      <NavItem label="功能">
        <rect x="11" y="12" width="25" height="25" rx="4" />
        <rect x="11" y="43" width="25" height="25" rx="4" />
        <rect x="43" y="43" width="25" height="25" rx="4" />
        <path d="M55.500 10l13.500 14.500-13.500 14.500L42 24.500z" />
      </NavItem>
      <NavItem label="设自选">
        <circle cx="40" cy="40" r="31" />
        <g fill="#666" stroke="none">
          <circle cx="26" cy="40" r="3.300" />
          <circle cx="40" cy="40" r="3.300" />
          <circle cx="54" cy="40" r="3.300" />
        </g>
      </NavItem>
    </div>
  );
}

export default function App() {
  return (
    <div className="w-[1260px] h-[2800px] bg-[#fefefe] overflow-hidden font-['Roboto','Noto_Sans_CJK_SC',sans-serif]">
      <StatusBar />
      <Header />
      <Quote />
      <PeriodTabs />
      <IndicatorRow />
      <PriceChart />
      <VolumeHeader />
      <VolumeChart />
      <TimeAxis />
      <RangeSlider />
      <Moves />
      <BottomNav />
    </div>
  );
}
